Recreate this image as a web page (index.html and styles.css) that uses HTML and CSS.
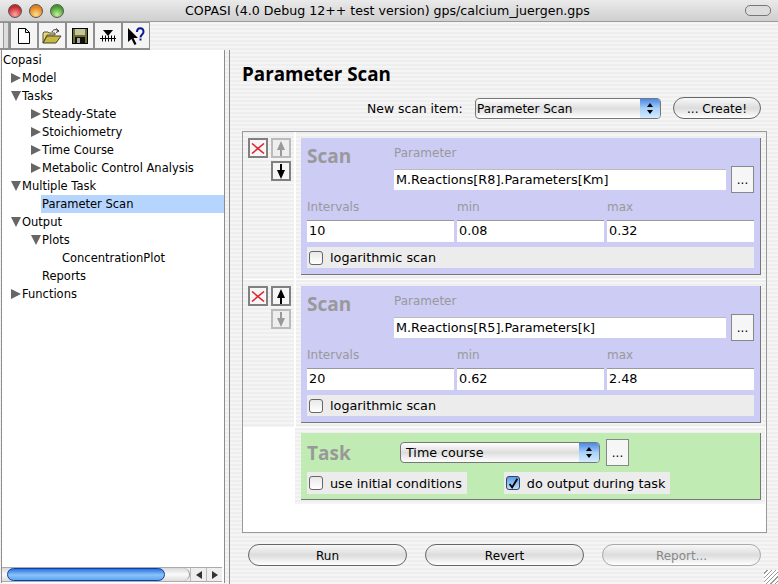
FILE: index.html
```html
<!DOCTYPE html>
<html lang="en">
<head>
    <meta charset="UTF-8">
    <title>COPASI</title>
    <link rel="stylesheet" href="styles.css">
</head>
<body>
<div class="window">
    <div class="titlebar">
        <div class="lights">
            <span class="light red"></span>
            <span class="light yellow"></span>
            <span class="light green"></span>
        </div>
        <div class="title">COPASI (4.0 Debug 12++ test version) gps/calcium_juergen.gps</div>
        <div class="pill"></div>
    </div>

    <div class="toolbar">
        <div class="tools">
            <div class="grip"></div>
            <div class="tool">
                <svg width="16" height="18" viewBox="0 0 16 18"><path d="M2.500 1.500h7l4 4v11h-11z M9.500 1.500v4h4" fill="#fff" stroke="#000"/></svg>
            </div>
            <div class="tool">
                <svg width="20" height="16" viewBox="0 0 20 16"><path d="M1 15V5l1-1h4l1 1h6v2H5z" fill="#e8d870" stroke="#554"/><path d="M1 15l4-7h14l-5 7z" fill="#c8b840" stroke="#443"/><path d="M10 4c1-3 5-3 6-1" fill="none" stroke="#333"/><path d="M14 0.500l3 2.500-3 1.500" fill="none" stroke="#333"/></svg>
            </div>
            <div class="tool">
                <svg width="16" height="16" viewBox="0 0 16 16"><rect x="0.500" y="0.500" width="15" height="15" fill="#6e6e2c" stroke="#000"/><rect x="3" y="1" width="10" height="6" fill="#c4c4a0"/><rect x="3" y="9" width="10" height="6.500" fill="#111"/><rect x="5" y="10" width="3" height="5" fill="#aaa"/></svg>
            </div>
            <div class="tool">
                <svg width="16" height="12" viewBox="0 0 16 12"><path d="M3 0h10L8 6z" fill="#000"/><path d="M0 8.500h16M2.500 5.500v6M5.500 5.500v6M8.500 5.500v6M11.500 5.500v6M14.500 5.500v6" stroke="#000" fill="none"/></svg>
            </div>
            <div class="tool">
                <svg width="18" height="18" viewBox="0 0 18 18"><path d="M1 1v14l3.500-3 3 6 2-1-3-6H11z" fill="#000"/><path d="M10 5c0-5 6.500-5 6.500 0 0 2.500-3 2.500-3 5.500" fill="none" stroke="#0a1a90" stroke-width="2"/><rect x="12.500" y="11.500" width="2" height="2" fill="#0a1a90"/></svg>
            </div>
        </div>
    </div>

    <div class="main">
        <div class="tree">
            <div class="tree-rows">
                <div class="node">Copasi</div>
                <div class="node lv1"><span class="arrow closed"></span>Model</div>
                <div class="node lv1"><span class="arrow open"></span>Tasks</div>
                <div class="node lv2"><span class="arrow closed"></span>Steady-State</div>
                <div class="node lv2"><span class="arrow closed"></span>Stoichiometry</div>
                <div class="node lv2"><span class="arrow closed"></span>Time Course</div>
                <div class="node lv2"><span class="arrow closed"></span>Metabolic Control Analysis</div>
                <div class="node lv1"><span class="arrow open"></span>Multiple Task</div>
                <div class="node lv2 leaf selected">Parameter Scan</div>
                <div class="node lv1"><span class="arrow open"></span>Output</div>
                <div class="node lv2"><span class="arrow open"></span>Plots</div>
                <div class="node lv3 leaf">ConcentrationPlot</div>
                <div class="node lv2 leaf">Reports</div>
                <div class="node lv1"><span class="arrow closed"></span>Functions</div>
            </div>
            <div class="hscroll">
                <div class="track"><div class="thumb"></div></div>
                <div class="scroll-btn"><span class="tri left"></span></div>
                <div class="scroll-btn"><span class="tri right"></span></div>
            </div>
        </div>

        <div class="splitter"></div>

        <div class="panel">
            <h1>Parameter Scan</h1>
            <div class="new-item">
                <span class="new-label">New scan item:</span>
                <div class="combo wide">
                    <span>Parameter Scan</span>
                    <span class="stepper"><i class="up"></i><i class="down"></i></span>
                </div>
                <button class="aqua create">... Create!</button>
            </div>

            <div class="frame">
                <div class="scan-row">
                    <div class="controls">
                        <div class="ctl-top">
                            <div class="sq"><svg width="14" height="11" viewBox="0 0 14 11"><path d="M1 0.500l12 10M13 0.500L1 10.500" stroke="#e0202a" stroke-width="1.500" fill="none"/></svg></div>
                            <div class="sq off"><svg width="8" height="15" viewBox="0 0 8 15"><path d="M4 0l4 9H5v6H3V9H0z" fill="#999"/></svg></div>
                        </div>
                        <div class="ctl-bottom">
                            <div class="sq"><svg width="8" height="15" viewBox="0 0 8 15"><path d="M4 15l4-9H5V0H3v6H0z" fill="#000"/></svg></div>
                        </div>
                    </div>
                    <div class="card blue">
                        <div class="card-head">
                            <div class="big">Scan</div>
                            <div class="param">
                                <div class="cap">Parameter</div>
                                <div class="param-line">
                                    <div class="field grow">M.Reactions[R8].Parameters[Km]</div>
                                    <div class="dots">...</div>
                                </div>
                            </div>
                        </div>
                        <div class="ranges">
                            <div><div class="cap">Intervals</div><div class="field">10</div></div>
                            <div><div class="cap">min</div><div class="field">0.08</div></div>
                            <div><div class="cap">max</div><div class="field">0.32</div></div>
                        </div>
                        <div class="check-line"><span class="check"></span>logarithmic scan</div>
                    </div>
                </div>

                <div class="scan-row">
                    <div class="controls">
                        <div class="ctl-top">
                            <div class="sq"><svg width="14" height="11" viewBox="0 0 14 11"><path d="M1 0.500l12 10M13 0.500L1 10.500" stroke="#e0202a" stroke-width="1.500" fill="none"/></svg></div>
                            <div class="sq"><svg width="8" height="15" viewBox="0 0 8 15"><path d="M4 0l4 9H5v6H3V9H0z" fill="#000"/></svg></div>
                        </div>
                        <div class="ctl-bottom">
                            <div class="sq off"><svg width="8" height="15" viewBox="0 0 8 15"><path d="M4 15l4-9H5V0H3v6H0z" fill="#999"/></svg></div>
                        </div>
                    </div>
                    <div class="card blue">
                        <div class="card-head">
                            <div class="big">Scan</div>
                            <div class="param">
                                <div class="cap">Parameter</div>
                                <div class="param-line">
                                    <div class="field grow">M.Reactions[R5].Parameters[k]</div>
                                    <div class="dots">...</div>
                                </div>
                            </div>
                        </div>
                        <div class="ranges">
                            <div><div class="cap">Intervals</div><div class="field">20</div></div>
                            <div><div class="cap">min</div><div class="field">0.62</div></div>
                            <div><div class="cap">max</div><div class="field">2.48</div></div>
                        </div>
                        <div class="check-line"><span class="check"></span>logarithmic scan</div>
                    </div>
                </div>

                <div class="task-row">
                    <div class="card green">
                        <div class="task-head">
                            <div class="big">Task</div>
                            <div class="combo task-combo">
                                <span>Time course</span>
                                <span class="stepper"><i class="up"></i><i class="down"></i></span>
                            </div>
                            <div class="dots">...</div>
                        </div>
                        <div class="task-checks">
                            <div class="check-line"><span class="check"></span>use initial conditions</div>
                            <div class="check-line"><span class="check on"><svg width="14" height="14" viewBox="0 0 14 14"><path d="M3 7l3 4 6-10" stroke="#000" stroke-width="2.200" fill="none"/></svg></span>do output during task</div>
                        </div>
                    </div>
                </div>
            </div>

            <div class="actions">
                <button class="aqua">Run</button>
                <button class="aqua">Revert</button>
                <button class="aqua disabled">Report...</button>
            </div>
        </div>
    </div>

    <div class="resize"></div>
</div>
</body>
</html>
```

FILE: styles.css
```css
html, body {
    margin: 0;
    padding: 0;
}
body {
    font-family: "DejaVu Sans", sans-serif;
    font-size: 12px;
    color: #000;
}
.window {
    position: relative;
    width: 778px;
    height: 584px;
    display: flex;
    flex-direction: column;
    overflow: hidden;
    background: repeating-linear-gradient(180deg, #eeeeee 0, #eeeeee 2px, #f5f5f5 2px, #f5f5f5 4px);
}

/* title bar */
.titlebar {
    height: 22px;
    display: flex;
    align-items: center;
    background: linear-gradient(180deg, #eaeaea, #cfcfcf);
    border-bottom: 1px solid #9a9a9a;
    box-sizing: border-box;
}
.lights {
    width: 185px;
    padding-left: 8px;
    box-sizing: border-box;
    display: flex;
    gap: 7px;
}
.light {
    width: 14px;
    height: 14px;
    border-radius: 50%;
    border: 1px solid #555;
    box-sizing: border-box;
}
.red { background: radial-gradient(circle at 50% 80%, #ffa8a0, #c8242c 70%); }
.yellow { background: radial-gradient(circle at 50% 80%, #ffe08a, #e0801c 70%); }
.green { background: radial-gradient(circle at 50% 80%, #c8f0a0, #3f9c28 70%); }
.title {
    flex: 1;
    font-size: 12.6px;
    white-space: nowrap;
}
.pill {
    width: 24px;
    height: 9px;
    margin-right: 7px;
    border: 1px solid #777;
    border-radius: 5px;
    background: #ddd;
}

/* toolbar */
.toolbar {
    height: 28px;
    flex: none;
    display: flex;
}
.tools {
    display: flex;
    gap: 2px;
    align-items: center;
    padding: 0 1px 0 3px;
    background: #8e8e8e;
    height: 28px;
    box-sizing: border-box;
    border-top: 1px solid #8e8e8e;
    border-bottom: 2px solid #8e8e8e;
}
.grip {
    width: 9px;
    height: 25px;
    margin-left: -3px;
    background: linear-gradient(90deg, #eeeeee 3px, #999 3px, #999 4px, #dddddd 4px, #dddddd 8px, #999 8px, #999 9px);
}
.tool {
    width: 26px;
    height: 25px;
    background: #f4f4f4;
    display: flex;
    align-items: center;
    justify-content: center;
}

/* tree */
.main {
    flex: 1;
    display: flex;
    min-height: 0;
}
.tree {
    width: 225px;
    margin: 0 0 1px 1px;
    background: #fff;
    border-right: 1px solid #8e8e8e;
    border-left: 1px solid #8e8e8e;
    box-sizing: border-box;
    display: flex;
    flex-direction: column;
}
.tree-rows {
    flex: 1;
    font-size: 11.5px;
    padding-top: 1px;
}
.node {
    height: 18px;
    line-height: 18px;
    white-space: nowrap;
    padding-left: 1px;
}
.lv1 { padding-left: 9px; }
.lv2 { padding-left: 29px; }
.lv2.leaf { margin-left: 39px; padding-left: 1px; }
.lv3.leaf { padding-left: 60px; }
.selected { background: #b5d5ff; }
.arrow {
    display: inline-block;
    margin-right: 1px;
    position: relative;
    top: 1px;
}
.closed {
    width: 0;
    height: 0;
    border-left: 10px solid #666;
    border-top: 5px solid transparent;
    border-bottom: 5px solid transparent;
}
.open {
    width: 0;
    height: 0;
    border-top: 10px solid #666;
    border-left: 5px solid transparent;
    border-right: 5px solid transparent;
}
.hscroll {
    height: 15px;
    margin: 0 2px 1px 0;
    display: flex;
    border-top: 1px solid #aaa;
    border-bottom: 1px solid #aaa;
    background: #eee;
    box-sizing: border-box;
}
.track {
    flex: 1;
    padding: 0 0 0 5px;
    background: linear-gradient(180deg, #d8d8d8, #fafafa 50%, #dcdcdc);
    border-radius: 0 8px 8px 0;
    border-right: 1px solid #999;
}
.thumb {
    width: 158px;
    height: 13px;
    box-sizing: border-box;
    border: 1px solid #0a3fa8;
    border-radius: 7px;
    background: linear-gradient(180deg, #2a74e0, #8cc4f8 55%, #5aa4f0);
}
.scroll-btn {
    width: 15px;
    display: flex;
    align-items: center;
    justify-content: center;
    border-left: 1px solid #bbb;
}
.tri {
    width: 0;
    height: 0;
    border-top: 4px solid transparent;
    border-bottom: 4px solid transparent;
}
.tri.left { border-right: 6px solid #333; }
.tri.right { border-left: 6px solid #333; }
.splitter {
    width: 4px;
    border-right: 1px solid #8e8e8e;
}

/* right panel */
.panel {
    flex: 1;
    padding: 12px 11px 0 12px;
    box-sizing: border-box;
    display: flex;
    flex-direction: column;
}
h1 {
    margin: 0;
    font-family: "Open Sans", sans-serif;
    font-size: 18.8px;
    line-height: 24px;
    font-weight: bold;
}
.new-item {
    display: flex;
    align-items: center;
    height: 24px;
    margin-top: 10px;
    margin-bottom: 11px;
    padding-left: 125px;
    padding-right: 6px;
}
.new-label {
    width: 108px;
    font-size: 12.4px;
}
.combo {
    height: 21px;
    box-sizing: border-box;
    border: 1px solid #777;
    border-radius: 4px;
    background: linear-gradient(180deg, #fff, #ddd 50%, #fff);
    display: flex;
    align-items: center;
    justify-content: space-between;
    padding-left: 1px;
}
.combo.wide {
    width: 186px;
    margin-top: 1px;
}
.stepper {
    width: 20px;
    height: 19px;
    border-radius: 0 3px 3px 0;
    background: linear-gradient(180deg, #4a88e4, #a8d0f8 50%, #d4ecff);
    display: flex;
    flex-direction: column;
    align-items: center;
    justify-content: center;
    gap: 3px;
}
.stepper i {
    width: 0;
    height: 0;
    border-left: 3px solid transparent;
    border-right: 3px solid transparent;
}
.stepper .up { border-bottom: 4px solid #000; }
.stepper .down { border-top: 4px solid #000; }
.aqua {
    font-family: inherit;
    font-size: 12px;
    color: #000;
    height: 22px;
    padding: 2px 0 0;
    border: 1px solid #666;
    border-radius: 11px;
    background: linear-gradient(180deg, #f8f8f8, #dcdcdc 50%, #fff);
}
.create {
    width: 88px;
    margin-left: 12px;
}
.frame {
    height: 402px;
    box-sizing: border-box;
    border: 1px solid #999;
    background: #fff;
}
.scan-row {
    display: flex;
    height: 148px;
    box-sizing: border-box;
    background: repeating-linear-gradient(180deg, #eeeeee 0, #eeeeee 2px, #f5f5f5 2px, #f5f5f5 4px);
    border-bottom: 1px solid #fff;
}
.controls {
    width: 46px;
    border-right: 2px solid #fff;
    padding: 6px 0 0 5px;
}
.ctl-top {
    display: flex;
    gap: 3px;
}
.ctl-bottom {
    display: flex;
    justify-content: flex-end;
    padding-top: 3px;
    width: 43px;
}
.sq {
    width: 20px;
    height: 20px;
    box-sizing: border-box;
    border: 2px solid #808080;
    background: #f6f6f6;
    display: flex;
    align-items: center;
    justify-content: center;
}
.sq.off {
    border-color: #bbb;
    background: #eee;
}
.card {
    box-sizing: border-box;
    padding: 0 6px;
    border-right: 1px solid #777;
    border-bottom: 1px solid #777;
}
.card.blue {
    width: 460px;
    height: 137px;
    margin: 6px 0 0 5px;
    background: #ccccf5;
}
.card.green {
    width: 460px;
    height: 67px;
    margin-left: 6px;
    background: #c0ecb4;
}
.card-head {
    display: flex;
}
.big {
    font-family: "Open Sans", sans-serif;
    font-size: 19px;
    font-weight: bold;
    color: #999;
    line-height: 24px;
}
.card-head .big {
    width: 87px;
    padding-top: 6px;
}
.param {
    flex: 1;
}
.cap {
    color: #999;
    line-height: 16px;
    height: 16px;
}
.param .cap {
    padding-top: 9px;
    height: 19px;
    line-height: 12px;
}
.param-line {
    display: flex;
    gap: 5px;
    align-items: center;
}
.field {
    height: 22px;
    line-height: 20px;
    font-size: 12.8px;
    background: #fff;
    padding-left: 2px;
    border-top: 1px solid #999;
    box-sizing: border-box;
}
.grow {
    flex: 1;
    height: 21px;
    border-top: 1px solid #bbb;
}
.dots {
    width: 23px;
    height: 27px;
    box-sizing: border-box;
    border: 1px solid #888;
    background: #f6f6f6;
    text-align: center;
    line-height: 27px;
    flex: none;
}
.ranges {
    display: grid;
    grid-template-columns: 147px 147px 147px;
    gap: 3px;
    margin-top: 6px;
}
.ranges .cap {
    margin-bottom: 5px;
}
.check-line {
    display: flex;
    align-items: center;
    height: 21px;
    font-size: 12.8px;
    background: #ececec;
    padding-left: 2px;
    margin-top: 5px;
}
.check {
    width: 14px;
    height: 14px;
    box-sizing: border-box;
    border: 1px solid #666;
    border-radius: 3px;
    background: linear-gradient(180deg, #e8e8e8, #fff);
    margin-right: 7px;
    display: flex;
}
.check.on {
    background: linear-gradient(180deg, #5b9bea, #bfe0ff);
    border-color: #345;
}

/* task */
.task-row {
    margin-left: 52px;
    height: 76px;
    box-sizing: border-box;
    padding-top: 5px;
    width: 470px;
    background: repeating-linear-gradient(180deg, #eeeeee 0, #eeeeee 2px, #f5f5f5 2px, #f5f5f5 4px);
}
.task-head {
    display: flex;
    align-items: center;
    height: 34px;
    padding-top: 5px;
    box-sizing: border-box;
}
.task-head .big {
    width: 93px;
}
.task-combo {
    width: 200px;
    padding-left: 5px;
    margin-right: 6px;
    font-size: 12.7px;
}
.task-checks {
    display: flex;
    gap: 37px;
}
.task-checks .check-line {
    margin-top: 5px;
    height: 22px;
    padding-right: 5px;
}

/* bottom buttons */
.actions {
    display: flex;
    gap: 18px;
    padding: 11px 6px 0;
}
.actions .aqua {
    width: 159px;
}
.aqua.disabled {
    color: #888;
    border-color: #aaa;
}
.resize {
    position: absolute;
    right: 0;
    bottom: 0;
    width: 14px;
    height: 14px;
    background: repeating-linear-gradient(135deg, #fff 0, #fff 2px, #999 2px, #999 3px);
}
```
